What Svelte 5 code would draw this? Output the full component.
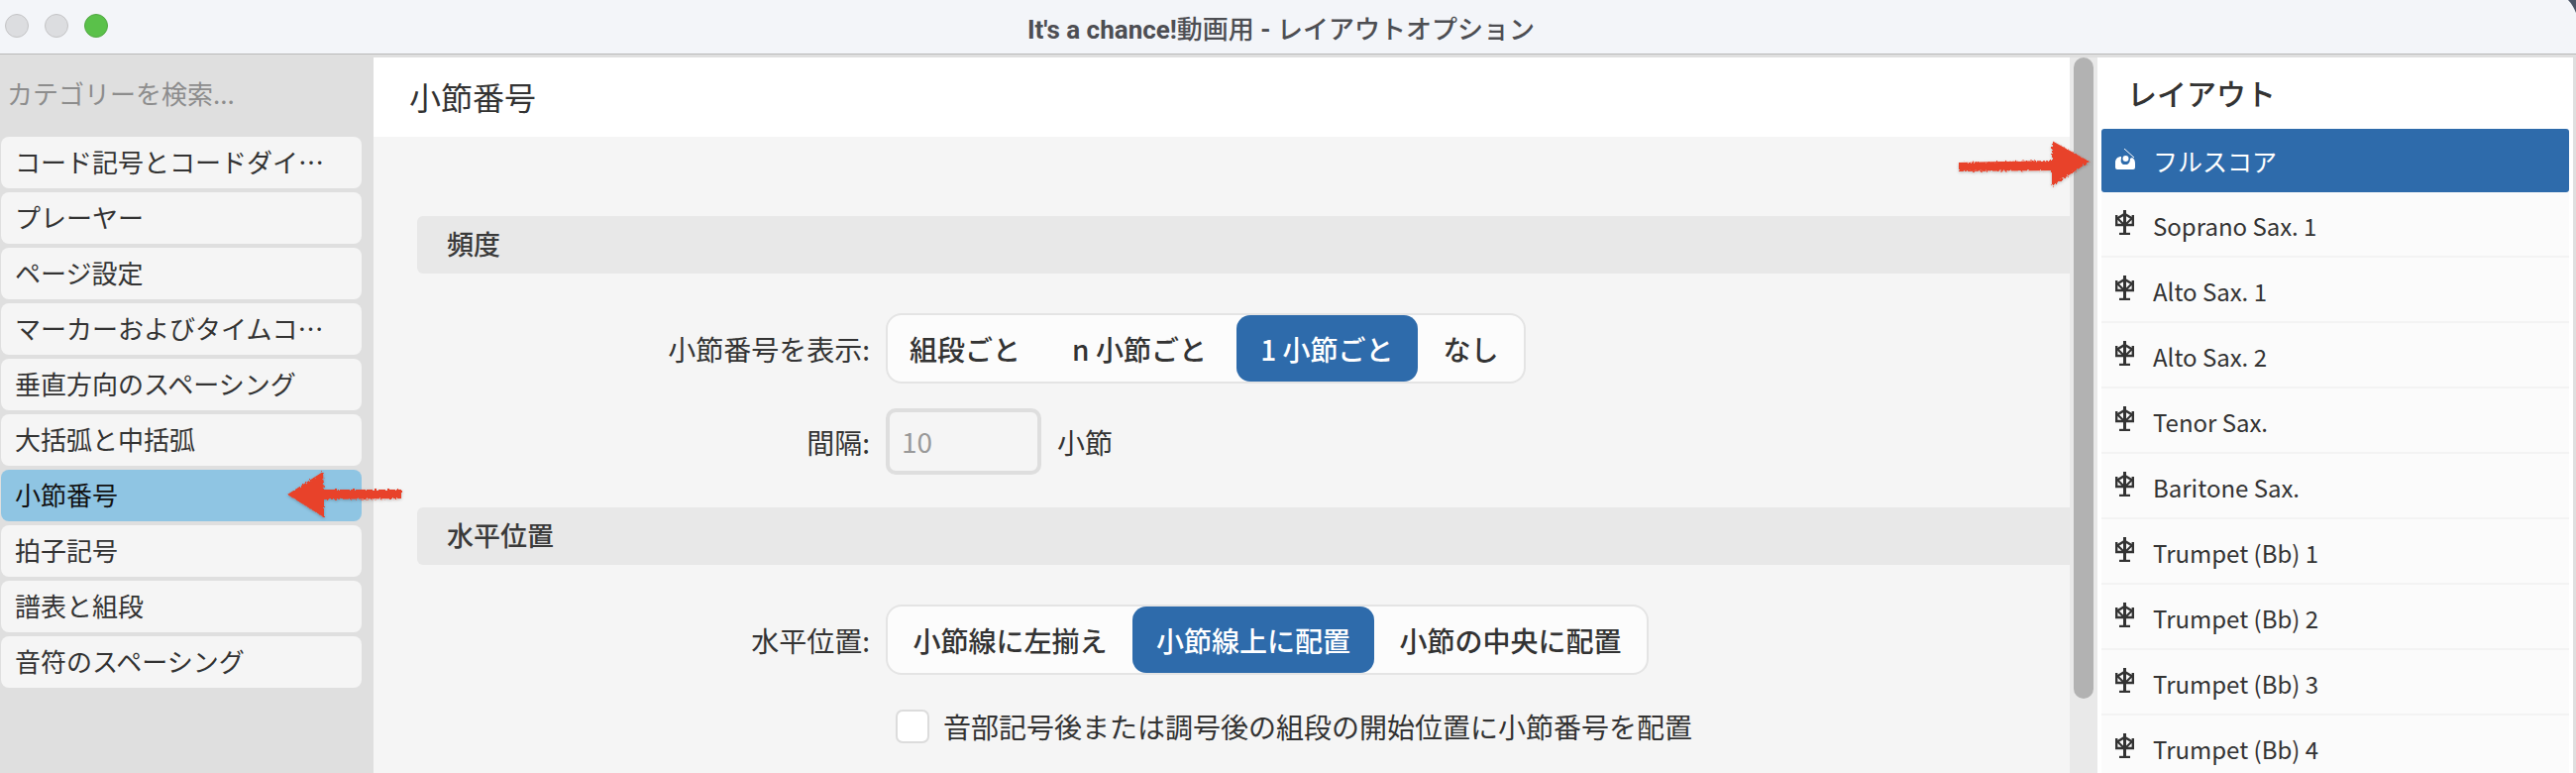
<script>
  const categories = [
    'コード記号とコードダイアグラム',
    'プレーヤー',
    'ページ設定',
    'マーカーおよびタイムコード',
    '垂直方向のスペーシング',
    '大括弧と中括弧',
    '小節番号',
    '拍子記号',
    '譜表と組段',
    '音符のスペーシング'
  ];
  const parts = [
    'Soprano Sax. 1',
    'Alto Sax. 1',
    'Alto Sax. 2',
    'Tenor Sax.',
    'Baritone Sax.',
    'Trumpet (Bb) 1',
    'Trumpet (Bb) 2',
    'Trumpet (Bb) 3',
    'Trumpet (Bb) 4'
  ];
  const frequency = ['組段ごと', 'n 小節ごと', '1 小節ごと', 'なし'];
  const position = ['小節線に左揃え', '小節線上に配置', '小節の中央に配置'];
</script>

<div class="window">
  <header class="titlebar">
    <div class="lights">
      <span class="light"></span>
      <span class="light"></span>
      <span class="light green"></span>
    </div>
    <div class="title"><b>It's a chance!</b>動画用 <b>-</b> レイアウトオプション</div>
    <svg class="corner" viewBox="0 0 8 13" width="8" height="13">
      <path d="M0 0 H8 V13 C6 8 4 4 0 0 Z" fill="#4d5566"/>
    </svg>
  </header>

  <div class="body">
    <aside class="sidebar">
      <div class="search">カテゴリーを検索...</div>
      <ul class="cats">
        {#each categories as cat}
          <li class:active={cat === '小節番号'}><span>{cat}</span></li>
        {/each}
      </ul>
    </aside>

    <main class="main">
      <div class="page-head">小節番号</div>
      <div class="page-body">
        <h3 class="section first">頻度</h3>
        <div class="row seg-row">
          <span class="label">小節番号を表示:</span>
          <div class="seg">
            {#each frequency as opt, i}
              <span class="opt f{i}" class:on={i === 2}>{opt}</span>
            {/each}
          </div>
        </div>
        <div class="row input-row">
          <span class="label">間隔:</span>
          <div class="input">10</div>
          <span class="unit">小節</span>
        </div>

        <h3 class="section">水平位置</h3>
        <div class="row seg-row pos">
          <span class="label">水平位置:</span>
          <div class="seg">
            {#each position as opt, i}
              <span class="opt p{i}" class:on={i === 1}>{opt}</span>
            {/each}
          </div>
        </div>
        <div class="row check-row">
          <span class="box"></span>
          <span>音部記号後または調号後の組段の開始位置に小節番号を配置</span>
        </div>
      </div>
    </main>

    <div class="scroll"><div class="thumb"></div></div>

    <section class="layouts">
      <div class="layouts-head">レイアウト</div>
      <div class="part selected">
        <svg class="icon" viewBox="0 0 20 21" width="20" height="21">
          <path d="M9 0 L19 9" stroke="#fff" stroke-width="1" fill="none"/>
          <path d="M0 14 C0 10 3 8 6 8 L6 10 C5 13 6 15 8 16 L12 16 C14 15 15 13 15 10 L17 9 C19 10 20 12 20 15 V19 Q20 21 18 21 H2 Q0 21 0 19 Z" fill="#fff"/>
          <circle cx="10.5" cy="10" r="3" fill="#fff"/>
        </svg>
        <span>フルスコア</span>
      </div>
      {#each parts as part}
        <div class="part">
          <svg class="icon" viewBox="0 0 19 25" width="19" height="25">
            <path d="M9.5 0 V24" stroke="#333" stroke-width="3" fill="none"/>
            <path d="M4 24 H15" stroke="#333" stroke-width="2.4" fill="none"/>
            <path d="M1 9 L9.5 4 L18 9" stroke="#333" stroke-width="2.6" fill="none"/>
            <path d="M1.2 5 V15 H17.8 V5" stroke="#333" stroke-width="2.4" fill="none"/>
            <path d="M2 8 L8 14 M17 8 L11 14" stroke="#333" stroke-width="2.2" fill="none"/>
          </svg>
          <span>{part}</span>
        </div>
      {/each}
    </section>
  </div>

  <svg class="arrow left" viewBox="0 0 130 60" width="130" height="60">
    <defs>
      <filter id="rough" x="-10%" y="-20%" width="120%" height="140%">
        <feTurbulence type="fractalNoise" baseFrequency="0.45" numOctaves="2" seed="4" result="n"/>
        <feDisplacementMap in="SourceGraphic" in2="n" scale="4" result="d"/>
        <feDropShadow in="d" dx="0" dy="1" stdDeviation="1.5" flood-color="#000" flood-opacity="0.25"/>
      </filter>
    </defs>
    <path d="M5 29 L41 6 L42 24 L120 24 L120 33 L42 34 L42 52 Z" fill="#e8422a" filter="url(#rough)"/>
  </svg>
  <svg class="arrow right" viewBox="0 0 145 60" width="145" height="60">
    <path d="M138 26 L100 5 L100 25 L6 27 L6 36 L100 35 L100 51 Z" fill="#e8422a" filter="url(#rough)"/>
  </svg>
</div>

<style>
  :global(body) {
    margin: 0;
  }

  .window {
    position: relative;
    width: 2600px;
    height: 780px;
    overflow: hidden;
    background: #dfdfdf;
    font-family: "Noto Sans CJK JP", "Noto Sans", sans-serif;
    color: #333;
  }

  .titlebar {
    position: relative;
    height: 54px;
    background: #f3f5f9;
    border-bottom: 1px solid #b9b9b9;
    display: flex;
    align-items: center;
    justify-content: center;
  }

  .lights {
    position: absolute;
    left: 5px;
    top: 14px;
    display: flex;
    gap: 16px;
  }

  .light {
    width: 24px;
    height: 24px;
    box-sizing: border-box;
    border-radius: 50%;
    background: #dcdde0;
    border: 1px solid #c4c4c6;
  }

  .light.green {
    background: #5ac14a;
    border-color: #52a844;
  }

  .corner {
    position: absolute;
    right: 0;
    top: 0;
  }

  .title {
    font-family: Roboto, "Noto Sans CJK JP", sans-serif;
    font-size: 26px;
    font-weight: 500;
    color: #4d4e53;
    margin-left: -14px;
  }

  .title b {
    font-weight: 700;
  }

  .body {
    display: flex;
    height: 725px;
    padding-top: 3px;
    box-sizing: border-box;
  }

  .sidebar {
    width: 377px;
    flex: none;
  }

  .search {
    height: 80px;
    padding-left: 7px;
    line-height: 72px;
    font-size: 26px;
    color: #8d8d8d;
  }

  .cats {
    list-style: none;
    margin: 0;
    padding: 0 12px 0 1px;
    display: flex;
    flex-direction: column;
    gap: 4px;
  }

  .cats li {
    height: 52px;
    line-height: 50px;
    padding: 0 20px 0 14px;
    border-radius: 8px;
    background: #f5f5f5;
    font-size: 26px;
  }

  .cats li span {
    display: block;
    overflow: hidden;
    white-space: nowrap;
    text-overflow: ellipsis;
  }

  .cats li.active {
    background: #8fc5e3;
    color: #111;
  }

  .main {
    width: 1712px;
    flex: none;
    background: #f5f5f5;
  }

  .page-head {
    height: 80px;
    background: #fff;
    padding-left: 36px;
    line-height: 78px;
    font-size: 32px;
  }

  .page-body {
    padding-left: 44px;
  }

  .section {
    margin: 0;
    height: 58px;
    line-height: 56px;
    padding-left: 30px;
    background: #e8e8e8;
    border-radius: 6px 0 0 6px;
    font-size: 27px;
    font-weight: 500;
    color: #3a3a3a;
  }

  .section.first {
    margin-top: 80px;
  }

  .row {
    display: flex;
    align-items: center;
    font-size: 28px;
  }

  .label {
    width: 473px;
    padding-right: 16px;
    box-sizing: border-box;
    text-align: right;
    white-space: nowrap;
  }

  .seg-row {
    margin-top: 40px;
  }

  .seg {
    display: flex;
    height: 71px;
    box-sizing: border-box;
    border: 2px solid #e4e4e4;
    border-radius: 16px;
    background: #fcfcfc;
  }

  .opt {
    display: flex;
    align-items: center;
    justify-content: center;
    box-sizing: border-box;
    border-radius: 14px;
    white-space: nowrap;
    font-weight: 500;
  }

  .opt.on {
    background: #2e6bab;
    color: #fff;
  }

  .f0 { width: 156px; }
  .f1 { width: 196px; }
  .f2 { width: 183px; }
  .f3 { width: 107px; }
  .p0 { width: 247px; }
  .p1 { width: 244px; }
  .p2 { width: 275px; }

  .input-row {
    margin-top: 25px;
  }

  .input {
    width: 157px;
    height: 67px;
    box-sizing: border-box;
    border: 4px solid #dedede;
    border-radius: 10px;
    padding-left: 12px;
    line-height: 58px;
    color: #999;
  }

  .unit {
    margin-left: 16px;
  }

  .pos {
    margin-top: 40px;
  }

  .input-row + .section {
    margin-top: 33px;
  }

  .check-row {
    margin-top: 32px;
    padding-left: 483px;
    gap: 14px;
  }

  .box {
    width: 34px;
    height: 34px;
    box-sizing: border-box;
    border: 2px solid #dcdcdc;
    border-radius: 7px;
    background: #fff;
  }

  .scroll {
    width: 28px;
    flex: none;
    background: #e9e9e9;
    padding: 0 4px;
    box-sizing: border-box;
  }

  .thumb {
    width: 20px;
    height: 647px;
    border-radius: 10px;
    background: #b2b2b2;
  }

  .layouts {
    width: 480px;
    flex: none;
    background: #fff;
    box-sizing: border-box;
    padding: 0 4px;
  }

  .layouts-head {
    height: 72px;
    padding-left: 26px;
    line-height: 70px;
    font-size: 30px;
    font-weight: 500;
  }

  .part {
    display: flex;
    align-items: center;
    height: 66px;
    box-sizing: border-box;
    padding-top: 2px;
    background: #fbfbfb;
    border-bottom: 2px solid #f3f3f3;
    font-size: 24px;
  }

  .part.selected {
    height: 64px;
    padding-top: 0;
    background: #2e6bab;
    border: 0;
    border-radius: 3px;
    color: #fff;
    font-size: 25px;
  }

  .icon {
    margin: 0 19px 0 14px;
    flex: none;
    position: relative;
    top: -3px;
  }

  .selected .icon {
    top: -2px;
    margin-right: 18px;
  }

  .arrow {
    position: absolute;
  }

  .arrow.left {
    left: 285px;
    top: 470px;
  }

  .arrow.right {
    left: 1971px;
    top: 137px;
  }
</style>
